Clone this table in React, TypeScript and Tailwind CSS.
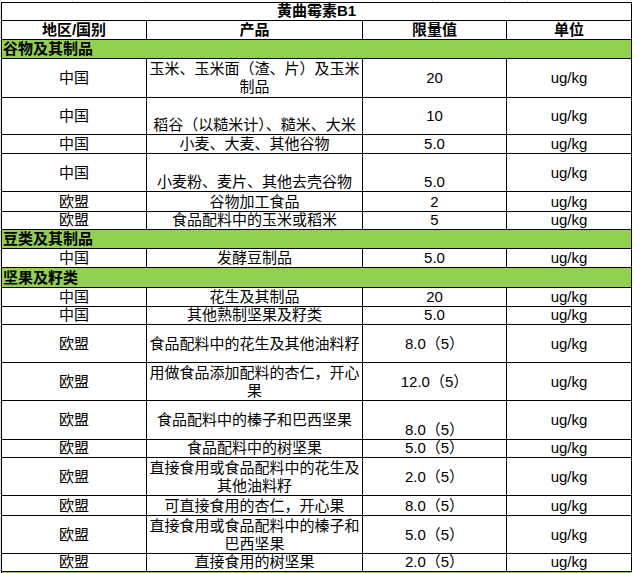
type Align = "c" | "b";

type DataRow = {
  kind: "data";
  h: string;
  region: string;
  product: string[];
  value: string;
  ra?: Align;
  pa?: Align;
  va?: Align;
  ua?: Align;
};

type SectionRow = { kind: "section"; h: string; title: string };

type Row = DataRow | SectionRow;

const rows: Row[] = [
  { kind: "section", h: "h-[19px]", title: "谷物及其制品" },
  { kind: "data", h: "h-[39px]", region: "中国", product: ["玉米、玉米面（渣、片）及玉米", "制品"], value: "20", ra: "c", pa: "c", va: "c", ua: "c" },
  { kind: "data", h: "h-[37px]", region: "中国", product: ["稻谷（以糙米计）、糙米、大米"], value: "10", ra: "c", pa: "b", va: "c", ua: "c" },
  { kind: "data", h: "h-[19px]", region: "中国", product: ["小麦、大麦、其他谷物"], value: "5.0" },
  { kind: "data", h: "h-[38px]", region: "中国", product: ["小麦粉、麦片、其他去壳谷物"], value: "5.0", ra: "c", pa: "b", va: "b", ua: "c" },
  { kind: "data", h: "h-[20px]", region: "欧盟", product: ["谷物加工食品"], value: "2" },
  { kind: "data", h: "h-[18px]", region: "欧盟", product: ["食品配料中的玉米或稻米"], value: "5" },
  { kind: "section", h: "h-[19px]", title: "豆类及其制品" },
  { kind: "data", h: "h-[19px]", region: "中国", product: ["发酵豆制品"], value: "5.0" },
  { kind: "section", h: "h-[20px]", title: "坚果及籽类" },
  { kind: "data", h: "h-[19px]", region: "中国", product: ["花生及其制品"], value: "20" },
  { kind: "data", h: "h-[18px]", region: "中国", product: ["其他熟制坚果及籽类"], value: "5.0" },
  { kind: "data", h: "h-[38px]", region: "欧盟", product: ["食品配料中的花生及其他油料籽"], value: "8.0（5）", ra: "c", pa: "c", va: "c", ua: "c" },
  { kind: "data", h: "h-[38px]", region: "欧盟", product: ["用做食品添加配料的杏仁，开心", "果"], value: "12.0（5）", ra: "c", pa: "c", va: "c", ua: "c" },
  { kind: "data", h: "h-[39px]", region: "欧盟", product: ["食品配料中的榛子和巴西坚果"], value: "8.0（5）", ra: "c", pa: "c", va: "b", ua: "c" },
  { kind: "data", h: "h-[18px]", region: "欧盟", product: ["食品配料中的树坚果"], value: "5.0（5）" },
  { kind: "data", h: "h-[38px]", region: "欧盟", product: ["直接食用或食品配料中的花生及", "其他油料籽"], value: "2.0（5）", ra: "c", pa: "c", va: "c", ua: "c" },
  { kind: "data", h: "h-[20px]", region: "欧盟", product: ["可直接食用的杏仁，开心果"], value: "8.0（5）" },
  { kind: "data", h: "h-[38px]", region: "欧盟", product: ["直接食用或食品配料中的榛子和", "巴西坚果"], value: "5.0（5）", ra: "c", pa: "c", va: "c", ua: "c" },
  { kind: "data", h: "h-[18px]", region: "欧盟", product: ["直接食用的树坚果"], value: "2.0（5）" },
];

const Cell = ({
  align = "b",
  bold,
  children,
}: {
  align?: Align;
  bold?: boolean;
  children: React.ReactNode;
}) => (
  <div
    className={`flex flex-col justify-center text-center border-r border-black overflow-hidden ${
      align === "b" ? "justify-end" : "justify-center"
    } ${bold ? "font-bold" : ""}`}
  >
    {children}
  </div>
);

const Line = ({ children }: { children: React.ReactNode }) => (
  <span className="block whitespace-nowrap leading-[18px]">{children}</span>
);

export default function App() {
  return (
    <div className="w-[633px] h-[573px] overflow-hidden bg-white text-black text-[15px] leading-[18px] font-['Liberation_Sans','Noto_Sans_CJK_SC',sans-serif] border-l border-[#dcdcdc]">
      {/* faint sheet gridlines above the table */}
      <div className="flex h-[2px]">
        <div className="w-[72px] border-r border-[#e3e3e3]" />
        <div className="w-[73px] border-r border-[#e3e3e3]" />
        <div className="w-[287px] border-r border-[#e3e3e3]" />
        <div className="w-[72px] border-r border-[#e3e3e3]" />
        <div className="w-[23px] border-r border-[#e3e3e3]" />
      </div>

      <div className="w-[631px] border-l border-t border-black">
        <div className="flex h-[18px] items-end justify-center border-b border-r border-black font-bold">
          <Line>黄曲霉素B1</Line>
        </div>

        <div className="grid grid-cols-[145px_216px_144px_125px] h-[19px] border-b border-black">
          <Cell bold><Line>地区/国别</Line></Cell>
          <Cell bold><Line>产品</Line></Cell>
          <Cell bold><Line>限量值</Line></Cell>
          <Cell bold><Line>单位</Line></Cell>
        </div>

        {rows.map((row, i) =>
          row.kind === "section" ? (
            <div
              key={i}
              className={`flex items-end pl-[1px] bg-[#92d050] border-b border-r border-black font-bold ${row.h}`}
            >
              <Line>{row.title}</Line>
            </div>
          ) : (
            <div
              key={i}
              className={`grid grid-cols-[145px_216px_144px_125px] border-b border-black ${row.h}`}
            >
              <Cell align={row.ra}><Line>{row.region}</Line></Cell>
              <Cell align={row.pa}>
                {row.product.map((l, j) => (
                  <Line key={j}>{l}</Line>
                ))}
              </Cell>
              <Cell align={row.va}><Line>{row.value}</Line></Cell>
              <Cell align={row.ua}><Line>ug/kg</Line></Cell>
            </div>
          )
        )}
      </div>

      <div className="w-[631px] h-[2px] bg-[#92d050] border-l border-black" />
    </div>
  );
}
